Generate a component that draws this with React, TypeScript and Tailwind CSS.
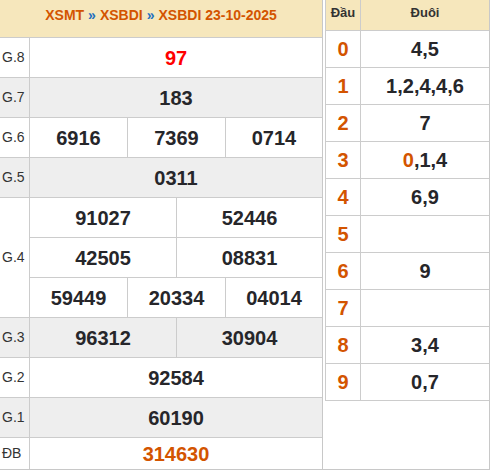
const font = { fontFamily: '"Liberation Sans", Arial, sans-serif' };

type Row = { label?: string; span?: number; nums: string[]; alt?: boolean; color?: string };

const rows: Row[] = [
  { label: "G.8", nums: ["97"], color: "text-[#ff0000]" },
  { label: "G.7", nums: ["183"], alt: true },
  { label: "G.6", nums: ["6916", "7369", "0714"] },
  { label: "G.5", nums: ["0311"], alt: true },
  { label: "G.4", span: 3, nums: ["91027", "52446"] },
  { nums: ["42505", "08831"] },
  { nums: ["59449", "20334", "04014"] },
  { label: "G.3", nums: ["96312", "30904"], alt: true },
  { label: "G.2", nums: ["92584"] },
  { label: "G.1", nums: ["60190"], alt: true },
];

const loto: [string, React.ReactNode][] = [
  ["0", "4,5"],
  ["1", "1,2,4,4,6"],
  ["2", "7"],
  ["3", <><span className="text-[#d35400]">0</span>,1,4</>],
  ["4", "6,9"],
  ["5", ""],
  ["6", "9"],
  ["7", ""],
  ["8", "3,4"],
  ["9", "0,7"],
];

function spanClass(n: number) {
  if (n === 1) return "col-span-6";
  if (n === 2) return "col-span-3";
  return "col-span-2";
}

export default function App() {
  return (
    <div style={font} className="flex w-[490px] h-[470px] overflow-hidden bg-white border-r border-b border-[#c8c8c8]">
      <div className="w-[323px] shrink-0 border-r border-[#c8c8c8]">
        <div className="grid grid-cols-[29px_repeat(5,48px)_47px] gap-px bg-[#cccccc]">
          <div className="col-span-7 h-[37px] bg-[#f6e7bc] flex justify-center pt-[5px] leading-[20px] text-[14px] font-bold text-[#d35400]">
            XSMT <span className="text-[#1f6fc0] mx-[4px]">»</span> XSBDI <span className="text-[#1f6fc0] mx-[4px]">»</span> XSBDI 23-10-2025
          </div>
          {rows.map((r, i) => {
            const bg = r.alt ? "bg-[#eeeeee]" : "bg-white";
            return (
              <>
                {r.label && (
                  <div
                    key={"l" + i}
                    className={`${bg} ${r.span === 3 ? "row-span-3" : ""} flex items-center pl-[2px] text-[14px] text-[#333]`}
                  >
                    {r.label}
                  </div>
                )}
                {r.nums.map((n, j) => (
                  <div
                    key={i + "-" + j}
                    className={`${bg} ${spanClass(r.nums.length)} h-[39px] flex items-center justify-center text-[20px] font-bold ${r.color ?? "text-[#26262a]"}`}
                  >
                    {n}
                  </div>
                ))}
              </>
            );
          })}
          <div className="bg-white h-[31px] flex items-center pl-[2px] text-[14px] text-[#333]">ĐB</div>
          <div className="bg-white col-span-6 h-[31px] flex items-center justify-center text-[20px] font-bold text-[#d35400]">
            314630
          </div>
        </div>
      </div>
      <div className="flex-1 pl-[2px]">
        <div className="grid grid-cols-[34px_1fr] gap-px bg-[#cccccc] border-l border-b border-[#cccccc]">
          <div className="h-[30px] bg-[#f6e7bc] flex justify-center pt-[4px] leading-[18px] text-[13px] font-bold text-[#333]">Đầu</div>
          <div className="h-[30px] bg-[#f6e7bc] flex justify-center pt-[4px] leading-[18px] text-[13px] font-bold text-[#333]">Đuôi</div>
          {loto.map(([d, v]) => (
            <>
              <div key={"d" + d} className="h-[36px] bg-white flex items-center justify-center text-[20px] font-bold text-[#d35400]">
                {d}
              </div>
              <div key={"v" + d} className="h-[36px] bg-white flex items-center justify-center text-[20px] font-bold text-[#26262a]">
                {v}
              </div>
            </>
          ))}
        </div>
      </div>
    </div>
  );
}
